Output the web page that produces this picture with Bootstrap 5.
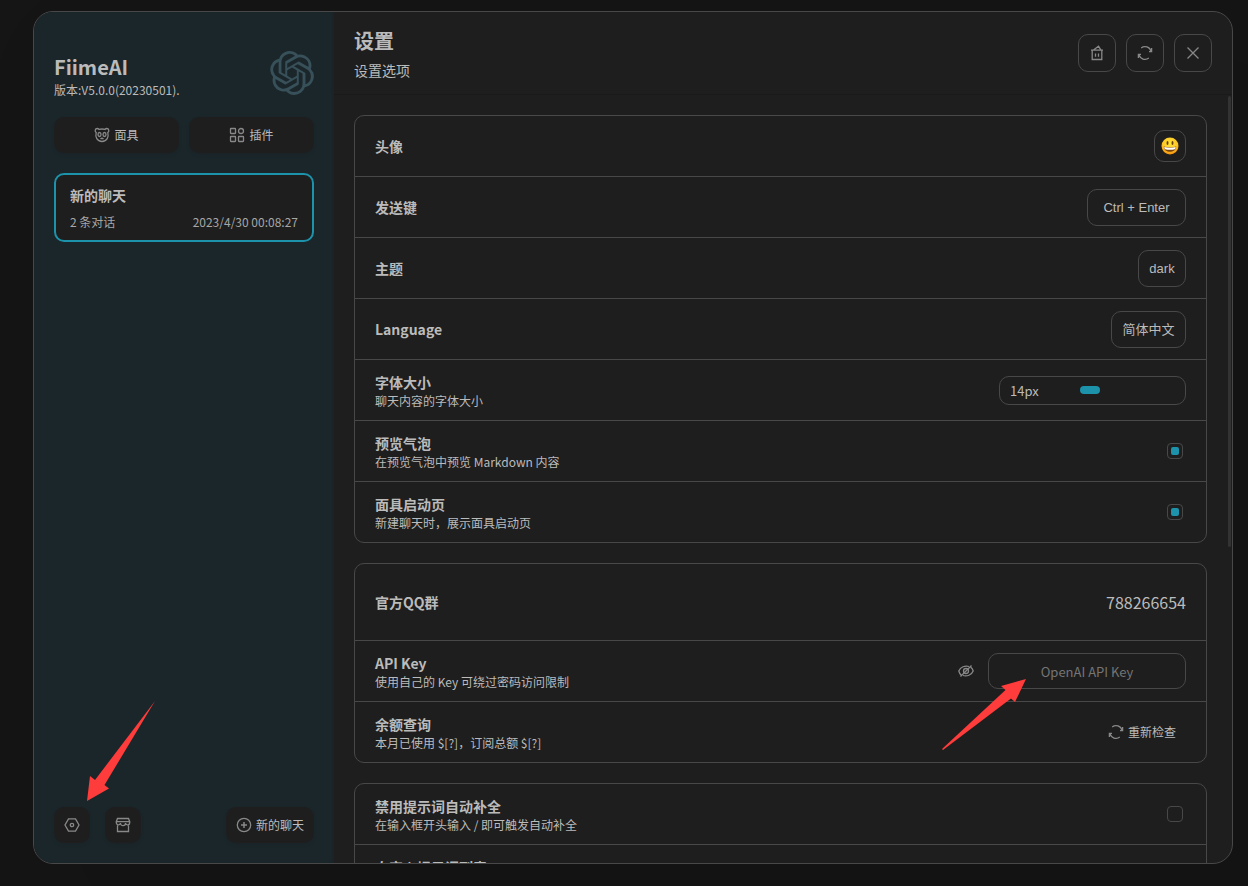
<!DOCTYPE html>
<html lang="zh-CN" data-bs-theme="dark">
<head>
<meta charset="utf-8">
<meta name="viewport" content="width=device-width, initial-scale=1">
<title>FiimeAI - 设置</title>
<link href="https://cdn.jsdelivr.net/npm/bootstrap@5.3.0/dist/css/bootstrap.min.css" rel="stylesheet">
<style>
:root{--line:#484848;--panel:#1e1e1e;--ink:#bbb;--primary:#1d93ab;--side:#1b262a}
body{background:#151515;color:var(--ink);font-family:"Noto Sans CJK SC",sans-serif;font-size:14px;line-height:20px}
h1,h2{color:var(--ink)}
.page{height:100vh;padding:11px 15px 22px 33px}
.window{background:var(--panel);border:1px solid var(--line);border-radius:20px;box-shadow:50px 50px 100px 10px rgba(0,0,0,.1)}
.side{width:300px;background:var(--side);padding:20px;box-shadow:inset -2px 0 2px rgba(0,0,0,.05)}
.brand{padding:19px 0 18px}
.brand h1{font-size:20px;line-height:28px;font-weight:700}
.brand-name{padding-top:2px}
.brand p,.note{font-size:12px;line-height:18px}
.brand-logo{color:#375059}
.pair{gap:10px;margin-bottom:20px}
.flat{background:var(--panel);color:var(--ink);border:0;border-radius:10px;height:36px;padding:0 10px;font-size:12px;box-shadow:0 2px 4px rgba(0,0,0,.05)}
.flat-icon{width:36px}
.glyph{fill:none;stroke:#888;stroke-width:1.3;flex:none}
.chat{background:var(--panel);border:2px solid var(--primary);border-radius:10px;padding:10px 14px 9px;color:var(--ink)}
.chat-meta{font-size:12px;line-height:18px;color:#a6a6a6;margin-top:8px}
.top{padding:14px 20px;border-bottom:1px solid rgba(0,0,0,.1)}
.top h2{font-size:20px;line-height:30px;font-weight:700}
.outline{background:transparent;border:1px solid var(--line);border-radius:10px;color:var(--ink);padding:0}
.sq{width:38px;height:38px;display:flex;align-items:center;justify-content:center}
.avatar{width:32px;height:32px}
.scroller{overflow-y:auto;scrollbar-width:none;padding:20px 25px 0 20px}
.scroller::-webkit-scrollbar{display:none}
.thumb{top:84px;right:1px;width:3px;height:451px;border-radius:2px;background:#333}
.group{background:transparent;border:1px solid var(--line);border-radius:10px;margin-bottom:20px}
.item{background:transparent;color:var(--ink);border:0;border-bottom:1px solid var(--line);padding:10px 20px;min-height:61px}
.item:last-child{border-bottom:0;min-height:60px}
.item-tall{min-height:77px}
.name{font-size:14px;line-height:20px;font-weight:700}
.desc{padding-top:2px}
.pick{appearance:none;height:37px;padding:1px 10px 0;text-align:center;font-family:"Liberation Sans","Noto Sans CJK SC",sans-serif;font-size:13px}
.pick-wide{width:99px}
.pick option{background:var(--panel)}
.slide{height:29px;padding:2px 10px 0;font-size:13px}
.slide span{width:28px}
.slide input{appearance:none;background:transparent;width:129px;margin:0 2px 2px 6px}
.slide input::-webkit-slider-thumb{appearance:none;width:20px;height:8px;border-radius:4px;background:var(--primary)}
.tick{appearance:none;width:16px;height:16px;margin:3px;border:1px solid var(--line);border-radius:4px;display:flex;align-items:center;justify-content:center}
.tick:checked::before{content:"";width:8px;height:8px;border-radius:2px;background:var(--primary)}
.key{width:198px;height:36px;text-align:center;font-size:13px}
.key::placeholder{color:#757575;opacity:1}
.bare{background:none;border:0;color:var(--ink);font-size:12px;padding:0 10px}
.arrow{fill:#fd3c3b;pointer-events:none;z-index:3}
.arrow-a{left:33px;bottom:42px}
.arrow-b{right:180px;top:38px}
</style>
</head>
<body>
<svg class="d-none">
  <symbol id="reload" viewBox="0 0 16 16"><path d="M4.2 2.9A6.2 6.2 0 0 1 14 6.3M11.8 13.1A6.2 6.2 0 0 1 2 9.7M14.6 3v3.6H12M1.4 13V9.4H4"/></symbol>
</svg>
<div class="page">
<div class="window d-flex h-100 overflow-hidden position-relative">
  <aside class="side d-flex flex-column flex-shrink-0">
    <div class="brand d-flex justify-content-between align-items-start">
      <div class="brand-name">
        <h1 class="mb-0">FiimeAI</h1>
        <p class="mb-0">版本:V5.0.0(20230501).</p>
      </div>
      <svg class="brand-logo" width="44" height="44" viewBox="0 0 24 24" fill="currentColor" aria-hidden="true"><path d="M22.2819 9.8211a5.9847 5.9847 0 0 0-.5157-4.9108 6.0462 6.0462 0 0 0-6.5098-2.9A6.0651 6.0651 0 0 0 4.9807 4.1818a5.9847 5.9847 0 0 0-3.9977 2.9 6.0462 6.0462 0 0 0 .7427 7.0966 5.98 5.98 0 0 0 .511 4.9107 6.051 6.051 0 0 0 6.5146 2.9001A5.9847 5.9847 0 0 0 13.2599 24a6.0557 6.0557 0 0 0 5.7718-4.2058 5.9894 5.9894 0 0 0 3.9977-2.9001 6.0557 6.0557 0 0 0-.7475-7.0729zm-9.022 12.6081a4.4755 4.4755 0 0 1-2.8764-1.0408l.1419-.0804 4.7783-2.7582a.7948.7948 0 0 0 .3927-.6813v-6.7369l2.02 1.1686a.071.071 0 0 1 .038.052v5.5826a4.504 4.504 0 0 1-4.4945 4.4944zm-9.6607-4.1254a4.4708 4.4708 0 0 1-.5346-3.0137l.142.0852 4.783 2.7582a.7712.7712 0 0 0 .7806 0l5.8428-3.3685v2.3324a.0804.0804 0 0 1-.0332.0615L9.74 19.9502a4.4992 4.4992 0 0 1-6.1408-1.6464zM2.3408 7.8956a4.485 4.485 0 0 1 2.3655-1.9728V11.6a.7664.7664 0 0 0 .3879.6765l5.8144 3.3543-2.0201 1.1685a.0757.0757 0 0 1-.071 0l-4.8303-2.7865A4.504 4.504 0 0 1 2.3408 7.872zm16.5963 3.8558L13.1038 8.364 15.1192 7.2a.0757.0757 0 0 1 .071 0l4.8303 2.7913a4.4944 4.4944 0 0 1-.6765 8.1042v-5.6772a.79.79 0 0 0-.407-.667zm2.0107-3.0231l-.142-.0852-4.7735-2.7818a.7759.7759 0 0 0-.7854 0L9.409 9.2297V6.8974a.0662.0662 0 0 1 .0284-.0615l4.8303-2.7866a4.4992 4.4992 0 0 1 6.6802 4.66zM8.3065 12.863l-2.02-1.1638a.0804.0804 0 0 1-.038-.0567V6.0742a4.4992 4.4992 0 0 1 7.3757-3.4537l-.142.0805L8.704 5.459a.7948.7948 0 0 0-.3927.6813zm1.0976-2.3654l2.602-1.4998 2.6069 1.4998v2.9994l-2.5974 1.4997-2.6067-1.4997Z"/></svg>
    </div>
    <div class="pair d-flex">
      <button type="button" class="flat flex-fill d-flex align-items-center justify-content-center">
        <svg class="glyph me-1" width="16" height="16" viewBox="0 0 16 16"><path d="M2.200 5.600C.5 4.500 1 1.500 3.200 1.500q1.200 0 1.800.9Q8 1.600 11 2.400q.6-.9 1.800-.9c2.200 0 2.700 3 1 4.100C15 10 13 14.500 8 14.500S1 10 2.200 5.600Z"/><ellipse cx="5.500" cy="7.500" rx="1.500" ry="2"/><ellipse cx="10.500" cy="7.500" rx="1.500" ry="2"/><path d="M6.500 12q1.500-1.500 3 0"/></svg>面具</button>
      <button type="button" class="flat flex-fill d-flex align-items-center justify-content-center">
        <svg class="glyph me-1" width="16" height="16" viewBox="0 0 16 16"><rect x="1.500" y="1.500" width="5" height="5" rx=".5"/><circle cx="12" cy="4" r="2.500"/><rect x="1.500" y="9.500" width="5" height="5" rx=".5"/><rect x="9.500" y="9.500" width="5" height="5" rx=".5"/></svg>插件</button>
    </div>
    <a href="#" class="chat d-block text-decoration-none">
      <div class="name">新的聊天</div>
      <div class="chat-meta d-flex justify-content-between"><span>2 条对话</span><span>2023/4/30 00:08:27</span></div>
    </a>
    <div class="mt-auto d-flex justify-content-between position-relative">
      <div class="d-flex" style="gap:15px">
        <button type="button" class="flat flat-icon d-flex align-items-center justify-content-center" aria-label="设置">
          <svg class="glyph" width="16" height="16" viewBox="0 0 16 16"><path d="M4.500 1.900h7L15 8l-3.500 6.100h-7L1 8Z"/><circle cx="8" cy="8" r="1.700"/></svg></button>
        <button type="button" class="flat flat-icon d-flex align-items-center justify-content-center" aria-label="商店">
          <svg class="glyph" width="16" height="16" viewBox="0 0 16 16"><path d="M2.500 1.500h11l1.200 3.200H1.300ZM1.400 4.700v1a2 2 0 0 0 4 .3 2.600 2.600 0 0 0 5.200 0 2 2 0 0 0 4-.3v-1M2.500 8.500v6h11v-6"/></svg></button>
      </div>
      <button type="button" class="flat d-flex align-items-center">
        <svg class="glyph me-1" width="16" height="16" viewBox="0 0 16 16"><circle cx="8" cy="8" r="6.700"/><path d="M8 5v6M5 8h6" stroke-width="1.500"/></svg>新的聊天</button>
      <svg class="arrow arrow-a position-absolute" width="68" height="100" viewBox="0 0 68 100" aria-hidden="true"><path d="M68 0 17.500 84 22 87.500 0 100 3 75 8 79Z"/></svg>
    </div>
  </aside>

  <main class="flex-grow-1 d-flex flex-column overflow-hidden">
    <header class="top d-flex justify-content-between align-items-center">
      <div>
        <h2 class="mb-1">设置</h2>
        <p class="mb-0">设置选项</p>
      </div>
      <div class="d-flex" style="gap:10px">
        <button type="button" class="outline sq" aria-label="清除"><svg class="glyph" width="16" height="16" viewBox="0 0 16 16"><path d="M2 5.200h12M3.200 5.500v9h9.600v-9M4.500 5 9.500 1.200l2.300 3.600M6.500 8.500v3.200M9.500 8.500v3.200"/></svg></button>
        <button type="button" class="outline sq" aria-label="重置"><svg class="glyph" width="16" height="16"><use href="#reload"/></svg></button>
        <button type="button" class="outline sq" aria-label="关闭"><svg class="glyph" width="16" height="16" viewBox="0 0 16 16"><path d="m2.500 2.500 11 11M13.500 2.500l-11 11"/></svg></button>
      </div>
    </header>
    <div class="scroller flex-grow-1">
      <div class="group list-group">
        <div class="item list-group-item d-flex justify-content-between align-items-center">
          <div class="name">头像</div>
          <button type="button" class="outline avatar d-flex align-items-center justify-content-center" aria-label="头像">
            <svg width="18" height="18" viewBox="0 0 18 18"><defs><radialGradient id="face" cx=".5" cy=".35" r=".65"><stop offset="0" stop-color="#ffe638"/><stop offset=".65" stop-color="#fdc727"/><stop offset="1" stop-color="#f28c0c"/></radialGradient></defs><circle cx="9" cy="9" r="8.500" fill="url(#face)"/><ellipse cx="6.500" cy="6" rx="1" ry="1.900" fill="#6a3d0b"/><ellipse cx="11.500" cy="6" rx="1" ry="1.900" fill="#6a3d0b"/><path d="M2.800 9.500q6.200 1.800 12.400 0c0 7-12.400 7-12.400 0Z" fill="#7a430d"/><path d="M3.200 9.900q5.800 1.500 11.600 0-.1 1.500-.8 2.300-5 1.200-10 0-.7-.8-.8-2.300Z" fill="#fff"/></svg>
          </button>
        </div>
        <div class="item list-group-item d-flex justify-content-between align-items-center">
          <label class="name" for="send">发送键</label>
          <select id="send" class="outline pick pick-wide"><option>Enter</option><option selected>Ctrl + Enter</option><option>Shift + Enter</option><option>Alt + Enter</option></select>
        </div>
        <div class="item list-group-item d-flex justify-content-between align-items-center">
          <label class="name" for="theme">主题</label>
          <select id="theme" class="outline pick"><option>auto</option><option selected>dark</option><option>light</option></select>
        </div>
        <div class="item list-group-item d-flex justify-content-between align-items-center">
          <label class="name" for="lang">Language</label>
          <select id="lang" class="outline pick"><option selected>简体中文</option><option>English</option></select>
        </div>
        <div class="item list-group-item d-flex justify-content-between align-items-center">
          <label class="desc" for="size"><span class="name d-block">字体大小</span><span class="note d-block">聊天内容的字体大小</span></label>
          <div class="outline slide d-flex align-items-center"><span>14px</span><input id="size" type="range" min="12" max="18" value="14"></div>
        </div>
        <div class="item list-group-item d-flex justify-content-between align-items-center">
          <label class="desc" for="bubble"><span class="name d-block">预览气泡</span><span class="note d-block">在预览气泡中预览 Markdown 内容</span></label>
          <input id="bubble" type="checkbox" class="tick" checked>
        </div>
        <div class="item list-group-item d-flex justify-content-between align-items-center">
          <label class="desc" for="mask"><span class="name d-block">面具启动页</span><span class="note d-block">新建聊天时，展示面具启动页</span></label>
          <input id="mask" type="checkbox" class="tick" checked>
        </div>
      </div>

      <div class="group list-group">
        <div class="item item-tall list-group-item d-flex justify-content-between align-items-center">
          <div class="name">官方QQ群</div>
          <div class="fs-6">788266654</div>
        </div>
        <div class="item list-group-item d-flex justify-content-between align-items-center position-relative">
          <label class="desc" for="key"><span class="name d-block">API Key</span><span class="note d-block">使用自己的 Key 可绕过密码访问限制</span></label>
          <div class="d-flex align-items-center" style="gap:4px">
            <button type="button" class="bare d-flex" aria-label="显示"><svg class="glyph" width="16" height="16" viewBox="0 0 16 16"><path d="M3.200 12.200C2 11 1.200 9.500.8 8 2.500 4 7 2.200 11 3.500M12.800 4.200C14 5.200 14.800 6.500 15.200 8c-1.700 4-6.200 5.800-10.200 4.500M13.500 2.500l-11 11"/><circle cx="8" cy="8" r="2.500"/></svg></button>
            <input id="key" type="text" class="outline key" placeholder="OpenAI API Key">
          </div>
          <svg class="arrow arrow-b position-absolute" width="84" height="71" viewBox="0 0 84 71" aria-hidden="true"><path d="M84 0 59 7 63.500 11 0 70 1 71 69 19.500 73 23Z"/></svg>
        </div>
        <div class="item list-group-item d-flex justify-content-between align-items-center">
          <div class="desc"><div class="name">余额查询</div><div class="note">本月已使用 $[?]，订阅总额 $[?]</div></div>
          <button type="button" class="bare d-flex align-items-center"><svg class="glyph me-1" width="16" height="16"><use href="#reload"/></svg>重新检查</button>
        </div>
      </div>

      <div class="group list-group">
        <div class="item list-group-item d-flex justify-content-between align-items-center">
          <label class="desc" for="auto"><span class="name d-block">禁用提示词自动补全</span><span class="note d-block">在输入框开头输入 / 即可触发自动补全</span></label>
          <input id="auto" type="checkbox" class="tick">
        </div>
        <div class="item list-group-item d-flex align-items-start">
          <div class="desc name">自定义提示词列表</div>
        </div>
      </div>
    </div>
  </main>
  <div class="thumb position-absolute"></div>
</div>
</div>
<script src="https://cdn.jsdelivr.net/npm/bootstrap@5.3.0/dist/js/bootstrap.bundle.min.js"></script>
</body>
</html>
